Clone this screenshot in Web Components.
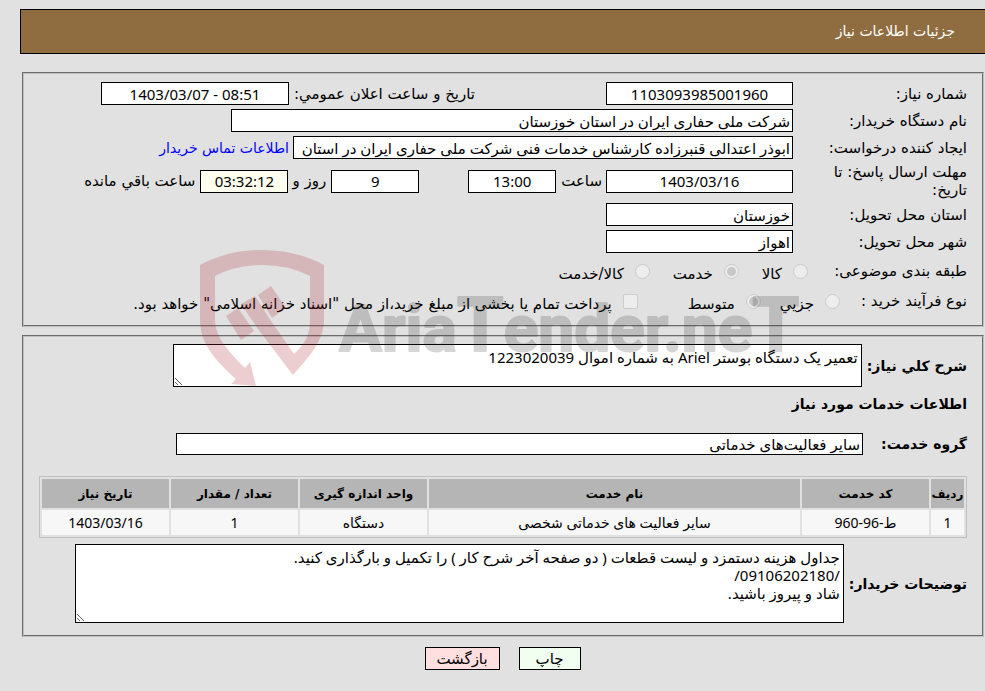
<!DOCTYPE html>
<html lang="fa" dir="rtl">
<head>
<meta charset="utf-8">
<title>جزئیات اطلاعات نیاز</title>
<style>
  body {
    --input-font: 15px/18px "Noto Sans", "DejaVu Sans", sans-serif;
    margin: 0;
    background: #e1e1e1;
    color: #000;
    font: 15px/18px "DejaVu Sans", sans-serif;
  }
</style>
</head>
<body>
<need-page>
  <page-title>جزئیات اطلاعات نیاز</page-title>

  <info-panel>
    <form-row>
      <text-field lead label="شماره نیاز:" value="1103093985001960" center style="--w: 187px"></text-field>
      <text-field class="second" label="تاریخ و ساعت اعلان عمومي:" value="1403/03/07 - 08:51" center style="--w: 188px"></text-field>
    </form-row>
    <form-row>
      <text-field lead label="نام دستگاه خریدار:" value="شرکت ملی حفاری ایران در استان خوزستان" style="--w: 562px"></text-field>
    </form-row>
    <form-row>
      <text-field lead label="ایجاد کننده درخواست:" value="ابوذر اعتدالی قنبرزاده کارشناس خدمات فنی شرکت ملی حفاری ایران در استان" style="--w: 500px"></text-field>
      <a class="contact" href="#contact">اطلاعات تماس خریدار</a>
    </form-row>
    <form-row>
      <text-field lead label="مهلت ارسال پاسخ: تا تاریخ:" value="1403/03/16" center style="--w: 187px"></text-field>
      <text-field label="ساعت" value="13:00" center style="--w: 88px"></text-field>
      <text-field class="days" value="9" after="روز و" center style="--w: 88px"></text-field>
      <text-field value="03:32:12" after="ساعت باقي مانده" center style="--w: 88px; --bg: #fffff0"></text-field>
    </form-row>
    <form-row>
      <text-field lead label="استان محل تحویل:" value="خوزستان" style="--w: 187px"></text-field>
    </form-row>
    <form-row>
      <text-field lead label="شهر محل تحویل:" value="اهواز" style="--w: 187px"></text-field>
    </form-row>
    <choice-group label="طبقه بندی موضوعی:">
      <choice-item>کالا</choice-item>
      <choice-item checked>خدمت</choice-item>
      <choice-item>کالا/خدمت</choice-item>
    </choice-group>
    <choice-group label="نوع فرآیند خرید :" class="process">
      <choice-item>جزیي</choice-item>
      <choice-item checked>متوسط</choice-item>
      <choice-item type="checkbox" class="treasury">پرداخت تمام یا بخشی از مبلغ خرید،از محل "اسناد خزانه اسلامی" خواهد بود.</choice-item>
    </choice-group>
  </info-panel>

  <info-panel class="details">
    <text-block label="شرح کلي نیاز:" style="--h: 43px; --end: 134px">تعمیر یک دستگاه بوستر Ariel به شماره اموال 1223020039</text-block>
    <section-title>اطلاعات خدمات مورد نیاز</section-title>
    <service-group label="گروه خدمت:" value="سایر فعالیت‌های خدماتی"></service-group>
    <service-table></service-table>
    <text-block label="توضیحات خریدار:" style="--h: 79px; --end: 36px">جداول هزینه دستمزد و لیست قطعات ( دو صفحه آخر شرح کار ) را تکمیل و بارگذاری کنید.
/09106202180/
شاد و پیروز باشید.</text-block>
  </info-panel>

  <action-bar>
    <action-button style="--bg: #f0fff0; --w: 62px">چاپ</action-button>
    <action-button style="--bg: #ffdfdf; --w: 75px">بازگشت</action-button>
  </action-bar>

  <site-watermark></site-watermark>
</need-page>

<script>
let uid = 0;

// Small base class: each element only has to return its markup.
class BaseElement extends HTMLElement {
  connectedCallback() {
    this.attachShadow({ mode: "open" });
    this.shadowRoot.innerHTML = this.render();
  }

  attr(name) {
    return this.getAttribute(name) || "";
  }
}

customElements.define("need-page", class extends BaseElement {
  render() {
    return `
      <style>
        :host {
          display: flex;
          flex-direction: column;
          position: relative;
          padding: 9px 0 16px 20px;
        }
        ::slotted(info-panel) { margin: 18px 1px 0 2px; }
        ::slotted(info-panel.details) { margin-top: 8px; }
      </style>
      <slot></slot>
    `;
  }
});

customElements.define("page-title", class extends BaseElement {
  render() {
    return `
      <style>
        :host {
          display: block;
          background: #8f6d40;
          border: 1px solid #000;
          border-right: 0;
          padding: 0 30px;
        }
        h1 {
          margin: 0;
          color: #fff;
          font-size: 14px;
          font-weight: normal;
          line-height: 43px;
        }
      </style>
      <h1><slot></slot></h1>
    `;
  }
});

customElements.define("info-panel", class extends BaseElement {
  render() {
    return `
      <style>
        :host {
          display: flex;
          flex-direction: column;
          gap: 4px;
          border: 2px groove #c0c0c0;
          padding: 8px 15px 12px;
        }
        :host(.details) {
          gap: 6px;
          padding-top: 7px;
        }
        ::slotted(choice-group) { margin-top: 2px; }
        ::slotted(section-title) { margin-top: 2px; }
        ::slotted(service-group) { margin-top: 14px; }
        ::slotted(service-table) { margin-top: 15px; }
      </style>
      <slot></slot>
    `;
  }
});

customElements.define("form-row", class extends BaseElement {
  render() {
    return `
      <style>
        :host {
          display: flex;
          align-items: center;
          gap: 4px;
        }
        ::slotted(.second) { margin-right: 127px; }
        ::slotted(.days) { margin-right: 45px; }
        ::slotted(.contact) {
          color: #00f;
          font-size: 14px;
          text-decoration: none;
        }
      </style>
      <slot></slot>
    `;
  }
});

customElements.define("text-field", class extends BaseElement {
  render() {
    const id = `field-${++uid}`;
    const label = this.attr("label");
    const after = this.attr("after");
    return `
      <style>
        :host {
          display: flex;
          align-items: center;
          gap: 5px;
        }
        :host([lead]) { gap: 0; }
        :host([lead]) label {
          width: 144px;
          padding-left: 30px;
        }
        input {
          box-sizing: border-box;
          width: var(--w);
          height: 23px;
          margin: 0;
          padding: 1px 2px;
          border: 1px solid #000;
          border-radius: 0;
          background: var(--bg, #fff);
          color: inherit;
          font: var(--input-font);
        }
        /* centred fields hold numbers and dates, which read left to right */
        :host([center]) input {
          direction: ltr;
          text-align: center;
        }
      </style>
      ${label ? `<label for="${id}">${label}</label>` : ""}
      <input id="${id}" type="text" readonly value="${this.attr("value")}">
      ${after ? `<label for="${id}">${after}</label>` : ""}
    `;
  }
});

customElements.define("choice-group", class extends BaseElement {
  render() {
    return `
      <style>
        :host {
          display: flex;
          align-items: center;
          min-height: 24px;
        }
        .label { width: 159px; }
        :host(.process) .label { width: 127px; }
        .items {
          display: flex;
          gap: 23px;
        }
        :host(.process) .items { gap: 19px; }
        ::slotted(.treasury) { margin-right: 31px; }
      </style>
      <span class="label">${this.attr("label")}</span>
      <div class="items" role="group" aria-label="${this.attr("label")}"><slot></slot></div>
    `;
  }
});

customElements.define("choice-item", class extends BaseElement {
  render() {
    const type = this.attr("type") || "radio";
    return `
      <style>
        :host { display: block; }
        label {
          display: flex;
          align-items: center;
          gap: 11px;
        }
        span { padding-top: 6px; }
        input {
          appearance: none;
          box-sizing: border-box;
          width: 15px;
          height: 15px;
          margin: 0;
          border: 1px solid #cbcbcb;
          border-radius: 2px;
          background: #ededed;
        }
        input[type="radio"] { border-radius: 50%; }
        input:checked {
          background: radial-gradient(circle, #c8c8c8 0 4px, #ededed 5px);
        }
      </style>
      <label>
        <input type="${type}" disabled ${this.hasAttribute("checked") ? "checked" : ""}>
        <span><slot></slot></span>
      </label>
    `;
  }
});

customElements.define("section-title", class extends BaseElement {
  render() {
    return `
      <style>
        :host { display: block; }
        h2 {
          margin: 0;
          font-size: 14px;
          line-height: 18px;
        }
      </style>
      <h2><slot></slot></h2>
    `;
  }
});

customElements.define("text-block", class extends BaseElement {
  render() {
    return `
      <style>
        :host {
          display: flex;
          align-items: center;
          gap: 5px;
          padding-left: var(--end);
        }
        label {
          font-size: 14px;
          font-weight: bold;
        }
        textarea {
          box-sizing: border-box;
          flex: 1;
          min-width: 0;
          height: var(--h);
          margin: 0;
          padding: 3px;
          border: 1px solid #000;
          border-radius: 0;
          background: #fff;
          color: inherit;
          font: var(--input-font);
        }
      </style>
      <label for="text">${this.attr("label")}</label>
      <textarea id="text" readonly>${this.textContent}</textarea>
    `;
  }
});

customElements.define("service-group", class extends BaseElement {
  render() {
    return `
      <style>
        :host {
          display: flex;
          align-items: center;
          gap: 18px;
          padding-left: 137px;
        }
        label {
          font-size: 14px;
          font-weight: bold;
        }
        input {
          box-sizing: border-box;
          flex: 1;
          min-width: 0;
          height: 22px;
          margin: 0;
          padding: 1px 2px;
          border: 1px solid #000;
          background: #fff;
          color: inherit;
          font: var(--input-font);
        }
      </style>
      <label for="group">${this.attr("label")}</label>
      <input id="group" type="text" readonly value="${this.attr("value")}">
    `;
  }
});

customElements.define("service-table", class extends BaseElement {
  render() {
    const heads = ["ردیف", "کد خدمت", "نام خدمت", "واحد اندازه گیری", "تعداد / مقدار", "تاریخ نیاز"];
    const cells = ["1", "ط-96-960", "سایر فعالیت های خدماتی شخصی", "دستگاه", "1", "1403/03/16"];
    return `
      <style>
        :host { display: block; }
        table {
          width: 100%;
          table-layout: fixed;
          border: 1px solid #c0c0c0;
          border-spacing: 2px;
          text-align: center;
        }
        th, td { padding: 0; }
        th {
          height: 29px;
          background: #b5b5b5;
          font-size: 12px;
          white-space: nowrap;
        }
        td {
          height: 25px;
          background: #f7f7f7;
          font: var(--input-font);
          font-size: 14px;
        }
        .num { width: 33px; }
        .mid { width: 127px; }
      </style>
      <table>
        <colgroup>
          <col class="num"><col class="mid"><col><col class="mid"><col class="mid"><col class="mid">
        </colgroup>
        <thead><tr>${heads.map(text => `<th scope="col">${text}</th>`).join("")}</tr></thead>
        <tbody><tr>${cells.map(text => `<td>${text}</td>`).join("")}</tr></tbody>
      </table>
    `;
  }
});

customElements.define("action-bar", class extends BaseElement {
  render() {
    return `
      <style>
        :host {
          display: flex;
          justify-content: center;
          gap: 19px;
          margin-top: 10px;
        }
      </style>
      <slot></slot>
    `;
  }
});

customElements.define("action-button", class extends BaseElement {
  render() {
    return `
      <style>
        :host { display: block; }
        button {
          min-width: var(--w);
          height: 23px;
          padding: 0 10px;
          border: 1px solid #000;
          border-radius: 0;
          background: var(--bg);
          color: inherit;
          font: inherit;
        }
      </style>
      <button type="button"><slot></slot></button>
    `;
  }
});

// Translucent logo that lies over both panels.
customElements.define("site-watermark", class extends BaseElement {
  render() {
    return `
      <style>
        :host {
          position: absolute;
          top: 248px;
          left: 198px;
          pointer-events: none;
        }
        svg { display: block; }
        text {
          fill: #333;
          stroke: #333;
          stroke-width: 2px;
          stroke-linejoin: round;
          opacity: 0.2;
          direction: ltr;
          font: bold 64px Roboto, sans-serif;
        }
        .tall { font-size: 76px; }
      </style>
      <svg width="620" height="142" viewBox="198 248 620 142" aria-hidden="true">
        <g fill="#af262f" opacity="0.22">
          <path d="M200 265Q228 250 262 250Q296 250 324 265V320C324 340 310 356 293 375L258 329L241 304L255 296L271 321L294 354C305 344 310 335 310 320V276Q289 265 262 265Q235 265 215 276V320C215 337 229 352 245 368L250 362L256 386L231 384L236 379C216 361 200 344 200 320Z"/>
          <path d="M258 295L271 286L286 308L272 318Z"/>
          <path d="M226 316L238 308L254 331L241 340Z"/>
        </g>
        <text x="339" y="351">Aria<tspan class="tall">T</tspan>ender.ne<tspan class="tall">T</tspan></text>
      </svg>
    `;
  }
});
</script>
</body>
</html>
